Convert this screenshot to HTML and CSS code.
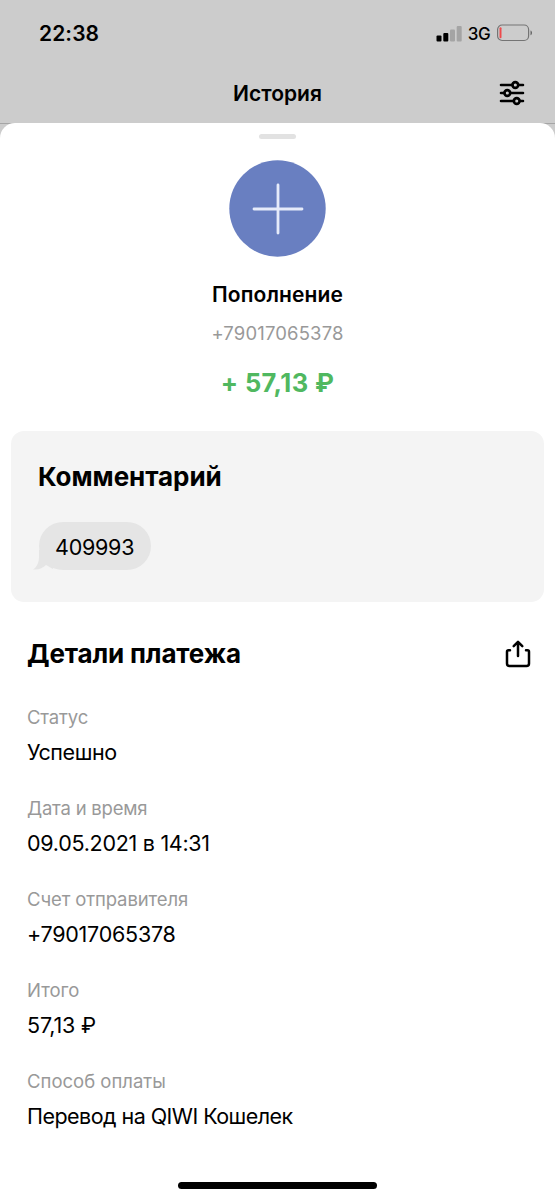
FILE: index.html
```html
<!DOCTYPE html>
<html lang="ru">
<head>
<meta charset="utf-8">
<title>История</title>
<link rel="stylesheet" href="styles.css">
</head>
<body>
<div class="screen">
  <header class="status-bar">
    <span class="clock">22:38</span>
    <div class="indicators">
      <svg class="signal" width="26" height="17" viewBox="0 0 26 17">
        <rect x="0.500" y="10.5" width="5" height="6" rx="1" fill="#000"/>
        <rect x="7.300" y="8" width="5" height="8.500" rx="1" fill="#000"/>
        <rect x="14" y="4.500" width="5" height="12" rx="1" fill="#a4a4a4"/>
        <rect x="20.700" y="1" width="5" height="15.500" rx="1" fill="#a4a4a4"/>
      </svg>
      <span class="network">3G</span>
      <svg class="battery" width="36" height="18" viewBox="0 0 36 18">
        <rect x="0.600" y="1" width="31" height="15.500" rx="4.500" fill="none" stroke="#747474" stroke-width="1.200"/>
        <rect x="2.500" y="3.300" width="2" height="11" rx="1" fill="#ed4a4c"/>
        <path d="M33.500 6.500c2 .7 2 4 0 4.800z" fill="#666"/>
      </svg>
    </div>
  </header>
  <nav class="nav-bar">
    <h1 class="nav-title">История</h1>
    <svg class="filter" width="26" height="26" viewBox="0 0 26 26" fill="none" stroke="#000" stroke-width="2.600" stroke-linecap="round">
      <path d="M2 5H13.500M20 5h4M2 13H5.500M12 13h12M2 21H15M21.500 21H24"/>
      <circle cx="16.300" cy="5" r="2.900"/>
      <circle cx="8.300" cy="13" r="2.900"/>
      <circle cx="17.700" cy="21" r="2.900"/>
    </svg>
  </nav>
  <main class="sheet">
    <div class="grabber"></div>
    <section class="summary">
      <svg class="avatar" width="97" height="97" viewBox="0 0 97 97">
        <circle cx="48.500" cy="48.500" r="48.200" fill="#697fc1"/>
        <path d="M49 25v48M25 49h48" stroke="#e6ebfa" stroke-width="2.800" stroke-linecap="round"/>
      </svg>
      <h2 class="name">Пополнение</h2>
      <p class="phone">+79017065378</p>
      <p class="amount">+ 57,13 ₽</p>
    </section>
    <section class="comment">
      <h2 class="heading heading-comment">Комментарий</h2>
      <div class="bubble">
        <svg class="tail" width="20" height="20" viewBox="0 0 20 20"><path d="M6 0V7C6 12 4 17 0 19.500C6 20 10 18 13 15L20 19V0z" fill="#e5e5e5"/></svg>
        <span class="bubble-text">409993</span>
      </div>
    </section>
    <section class="details">
      <div class="details-head">
        <h2 class="heading heading-details">Детали платежа</h2>
        <svg class="share" width="26" height="28" viewBox="0 0 26 28" fill="none" stroke="#000" stroke-width="2.500" stroke-linecap="round" stroke-linejoin="round">
          <path d="M5 10.300H3.500Q2 10.300 2 11.800V23.500Q2 26 4.500 26H21.500Q24 26 24 23.500V11.800Q24 10.300 22.500 10.300H21"/>
          <path d="M13 16V2M8.700 6.200L13 1.900L17.300 6.200"/>
        </svg>
      </div>
      <dl class="rows">
        <div class="row"><dt class="l-status">Статус</dt><dd class="v-status">Успешно</dd></div>
        <div class="row"><dt class="l-date">Дата и время</dt><dd class="v-date">09.05.2021 в 14:31</dd></div>
        <div class="row"><dt class="l-phone">Счет отправителя</dt><dd class="v-phone">+79017065378</dd></div>
        <div class="row"><dt>Итого</dt><dd class="v-total">57,13 ₽</dd></div>
        <div class="row"><dt>Способ оплаты</dt><dd class="v-method">Перевод на QIWI Кошелек</dd></div>
      </dl>
    </section>
    <div class="home-indicator"></div>
  </main>
</div>
</body>
</html>
```
FILE: styles.css
```css
* { box-sizing: border-box; margin: 0; padding: 0; }
body { font-family: Inter, "Liberation Sans", sans-serif; color: #000; background: #ccc; }
svg { display: block; flex: none; }
.screen { width: 555px; height: 1200px; display: flex; flex-direction: column; overflow: hidden; background: #ccc; }
.status-bar { height: 66px; padding: 0 22px 0 39px; display: flex; align-items: center; justify-content: space-between; }
.clock { font-size: 21px; font-weight: 600; letter-spacing: 0.1px; }
.indicators { display: flex; align-items: center; }
.network { font-size: 17px; font-weight: 500; margin: 2px 7px 0 6px; letter-spacing: -0.6px; }
.nav-bar { height: 58px; padding: 0 30px 3px; display: grid; grid-template-columns: 26px 1fr 26px; align-items: center; border-bottom: 1px solid #a5a5a5; }
.nav-title { grid-column: 2; text-align: center; font-size: 21px; font-weight: 600; }
.sheet { flex: 1; margin-top: -1px; background: #fff; border-radius: 15px 15px 0 0; display: flex; flex-direction: column; }
.grabber { width: 37px; height: 5px; margin: 11px auto 0; border-radius: 3px; background: #e2e2e2; }
.summary { display: flex; flex-direction: column; align-items: center; margin-top: 21px; height: 271px; }
.name { font-size: 21px; line-height: 26px; font-weight: 600; margin-top: 25px; letter-spacing: 0.1px; }
.phone { font-size: 18.500px; line-height: 24px; margin-top: 13px; color: #999; letter-spacing: 0.15px; }
.amount { font-size: 25.500px; line-height: 32px; margin-top: 22px; font-weight: 700; letter-spacing: 0.4px; color: #50b860; }
.comment { margin: 0 11px; height: 171px; padding: 29px 27px 0; border-radius: 13px; background: #f4f4f4; }
.heading { font-size: 26px; line-height: 34px; font-weight: 700; }
.heading-comment { letter-spacing: -0.05px; }
.heading-details { letter-spacing: -0.15px; }
.bubble { position: relative; width: 112px; height: 48px; margin: 28px 0 0 1px; border-radius: 24px; background: #e5e5e5; display: flex; align-items: center; padding: 2px 0 0 16px; }
.tail { position: absolute; left: -6px; bottom: 0; }
.bubble-text { position: relative; font-size: 21.500px; letter-spacing: -0.25px; }
.details { padding: 35px 24px 0 27px; }
.details-head { display: flex; justify-content: space-between; align-items: center; height: 34px; }
.rows { margin-top: 34px; }
.row { height: 91px; }
dt { font-size: 18.500px; line-height: 24px; color: #999; }
dd { font-size: 21.500px; line-height: 28px; margin-top: 9px; }
.l-status { letter-spacing: -0.15px; }
.l-date { letter-spacing: -0.22px; }
.l-phone { letter-spacing: -0.12px; }
.v-status { letter-spacing: -0.4px; }
.v-date { letter-spacing: -0.28px; }
.v-phone { letter-spacing: -0.25px; }
.v-total { letter-spacing: -0.15px; }
.v-method { letter-spacing: -0.54px; }
.home-indicator { width: 199px; height: 7px; margin: auto auto 11px; border-radius: 4px; background: #000; }
```
